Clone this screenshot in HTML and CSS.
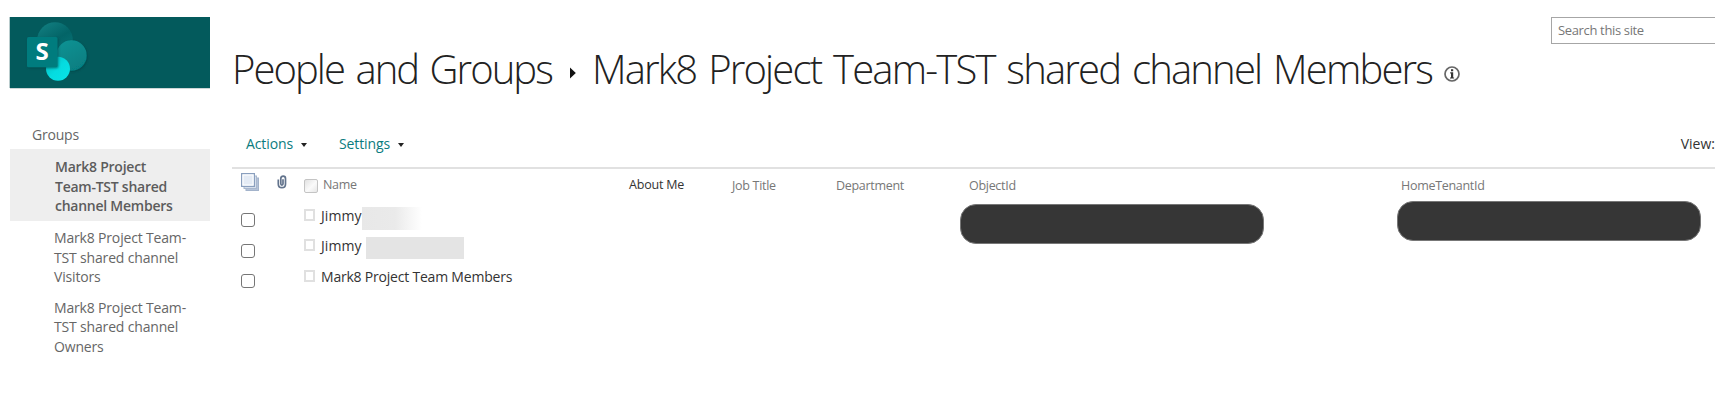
FILE: index.html
```html
<!DOCTYPE html>
<html lang="en">
<head>
<meta charset="utf-8">
<title>People and Groups</title>
<link rel="stylesheet" href="styles.css">
</head>
<body>
<div class="page">
  <aside class="sidebar">
    <div class="logo">
      <svg width="80" height="71" viewBox="0 0 80 71">
        <defs>
          <linearGradient id="g1" x1="0.2" y1="0" x2="0.8" y2="1"><stop offset="0" stop-color="#117e80"/><stop offset="0.5" stop-color="#036467"/><stop offset="1" stop-color="#087678"/></linearGradient>
          <linearGradient id="g2" x1="0.2" y1="0" x2="0.8" y2="1"><stop offset="0" stop-color="#0b9293"/><stop offset="1" stop-color="#067d80"/></linearGradient>
          <linearGradient id="g3" x1="0" y1="0" x2="1" y2="1"><stop offset="0" stop-color="#04b8bb"/><stop offset="0.5" stop-color="#05dce0"/><stop offset="1" stop-color="#08e4e8"/></linearGradient>
          <filter id="sh" x="-20%" y="-20%" width="150%" height="150%"><feDropShadow dx="0.8" dy="1" stdDeviation="1.1" flood-color="#003c40" flood-opacity="0.6"/></filter>
        </defs>
        <circle cx="45" cy="23" r="17.8" fill="url(#g1)"/>
        <circle cx="61.500" cy="38.500" r="15.200" fill="url(#g2)" filter="url(#sh)"/>
        <circle cx="48" cy="51.800" r="12" fill="url(#g3)"/>
        <rect x="17" y="20" width="30.500" height="30.300" rx="1.500" fill="#047b7e" filter="url(#sh)"/>
        <text x="32" y="42.800" class="logo-letter" text-anchor="middle">S</text>
      </svg>
    </div>
    <div class="nav-title"><span class="t-groups">Groups</span></div>
    <div class="nav-item selected">Mark8 Project<br>Team-TST shared<br>channel Members</div>
    <div class="nav-item">Mark8 Project Team-<br>TST shared channel<br>Visitors</div>
    <div class="nav-item">Mark8 Project Team-<br>TST shared channel<br>Owners</div>
  </aside>
  <main class="main">
    <div class="search-row"><div class="search"><span>Search this site</span></div></div>
    <h1 class="title">
      <span class="crumb">People and Groups</span>
      <svg class="crumb-arrow" width="6" height="12" viewBox="0 0 6 12"><path d="M0 0.500 5.800 6 0 11.500z" fill="#111"/></svg>
      <span class="current">Mark8 Project Team-TST shared channel Members</span>
      <svg class="info" width="16" height="16" viewBox="0 0 16 16"><circle cx="8" cy="8" r="7" fill="none" stroke="#666" stroke-width="1.700"/><path d="M7 3.300h2.200v1.900H7zM6.200 6.300h3v5.100h.9v1.100H6v-1.100h1V7.400h-.8z" fill="#333"/></svg>
    </h1>
    <div class="toolbar">
      <span class="menu actions">Actions</span><i class="caret c1"></i>
      <span class="menu settings">Settings</span><i class="caret c2"></i>
      <span class="view">View:</span>
    </div>
    <div class="table">
      <div class="cell h-all">
        <svg width="18" height="18" viewBox="0 0 18 18"><rect x="5" y="5" width="12.500" height="12.500" fill="#b4c2d8" stroke="#a3b3cb"/><rect x="3" y="3" width="12.500" height="12.500" fill="#d5deeb" stroke="#a8b7ce"/><rect x=".6" y=".6" width="12.800" height="12.800" fill="#e4ebf5" stroke="#8a9fbe" stroke-width="1.200"/><rect x="2" y="2" width="10" height="10" fill="none" stroke="#fff"/></svg>
      </div>
      <div class="cell h-clip">
        <svg width="10" height="14" viewBox="0 0 10 14" fill="none"><path d="M1.300 4.500v4.400c0 5 7.200 5 7.200 0V3.500c0-3.300-4.700-3.300-4.700 0v5.300c0 1.700 2.200 1.700 2.200 0V4.200" stroke="#62738c" stroke-width="1.700"/></svg>
      </div>
      <div class="cell h-name"><i class="presence-head"></i><span>Name</span></div>
      <div class="cell head about">About Me</div>
      <div class="cell head job">Job Title</div>
      <div class="cell head dept">Department</div>
      <div class="cell head obj">ObjectId</div>
      <div class="cell head home">HomeTenantId</div>

      <div class="check r1"></div>
      <div class="person r1"><i class="presence"></i><span class="jim">Jimmy</span><i class="mask fade"></i></div>
      <div class="check r2"></div>
      <div class="person r2"><i class="presence"></i><span class="jim">Jimmy</span><i class="mask solid"></i></div>
      <div class="check r3"></div>
      <div class="person r3"><i class="presence"></i><span class="team">Mark8 Project Team Members</span></div>
      <div class="pill pill-obj"></div>
      <div class="pill pill-home"></div>
    </div>
  </main>
</div>
</body>
</html>
```
FILE: styles.css
```css
* { box-sizing: border-box; }
body {
  margin: 0;
  background: #fff;
  color: #333;
  font: 14px/20px "Open Sans", "Noto Sans", sans-serif;
  overflow: hidden;
  white-space: nowrap;
}
.page { display: flex; width: 1715px; height: 409px; padding: 17px 0 0 10px; overflow: hidden; }
.sidebar { width: 200px; flex: none; }
.logo { height: 71px; background: #035a5c; box-shadow: 0 1px 0 #ccd6d7, -1px 0 0 #b9cccd; }
.logo svg { display: block; }
.logo-letter { font: 700 24px "Open Sans", sans-serif; fill: #fff; }
.nav-title { margin: 37px 0 4px; padding-left: 22px; color: #666; letter-spacing: -0.2px; }
.nav-item { line-height: 19.5px; padding-left: 44px; color: #666; letter-spacing: -0.17px; margin-bottom: 11px; }
.nav-item.selected { height: 72px; padding: 8px 0 0 45px; margin-bottom: 7px; background: #eee; font-weight: 600; color: #5c5c5c; letter-spacing: -0.25px; }

.main { flex: 1; margin-left: 22px; min-width: 0; }
.search-row { display: flex; justify-content: flex-end; height: 27px; }
.search { width: 164px; height: 27px; border: 1px solid #a6a6a6; border-right: 0; padding-left: 6px; font-size: 13px; line-height: 25px; color: #777; letter-spacing: -0.35px; }
.title { display: flex; margin: 0; height: 46px; font-size: 40px; line-height: 50px; font-weight: 300; color: #222; }
.crumb { width: 338px; letter-spacing: -1.95px; word-spacing: 3px; }
.crumb-arrow { margin-top: 23px; flex: none; }
.current { width: 868px; margin-left: 16px; letter-spacing: -1.82px; word-spacing: 3.2px; }
.info { margin-top: 22px; flex: none; margin-left: -16px; }
.toolbar { display: flex; margin-top: 44px; height: 35px; border-bottom: 2px solid #e1e1e1; padding-left: 14px; }
.menu { color: #0b7c7e; }
.actions { width: 55px; letter-spacing: -0.1px; }
.settings { width: 59px; margin-left: 32px; letter-spacing: -0.1px; }
.caret { width: 6px; height: 4px; margin-top: 9px; background: #222; clip-path: polygon(0 0, 100% 0, 50% 100%); }
.view { margin-left: auto; letter-spacing: 0; }

.table {
  display: grid;
  grid-template-columns: 36px 27px 325px 103px 104px 133px 432px 1fr;
  grid-template-rows: 37px 30px 30.500px 30px;
  padding-left: 9px;
}
.head, .h-name { padding-top: 8px; font-size: 12.500px; line-height: 18px; color: #777; letter-spacing: -0.3px; }
.h-name { padding-top: 7px; }
.head.about { color: #333; padding-top: 7px; letter-spacing: -0.2px; }
.h-all { padding-top: 4px; }
.h-clip { padding-top: 6px; }
.cell svg { display: block; }
.h-name { display: flex; gap: 5px; }
.presence-head { width: 14px; height: 14px; margin-top: 3px; border: 1px solid #c4c4c4; border-radius: 2px; background: linear-gradient(135deg, #e2e2e2, #fafafa 55%, #e6e6e6); }
.r1 { grid-row: 2; }
.r2 { grid-row: 3; }
.r3 { grid-row: 4; }
.check { grid-column: 1; width: 14px; height: 14px; margin-top: 7px; border: 1px solid #767676; border-radius: 3px; }
.check.r2 { margin-top: 8px; }
.person { grid-column: 3; display: flex; }
.presence { width: 11px; height: 12px; margin: 3px 6px 0 0; border: 2px solid #e0e0e0; }
.jim { width: 41px; letter-spacing: 0.1px; }
.team { letter-spacing: -0.21px; }
.mask { height: 23px; margin-top: 1px; }
.fade { width: 60px; background: linear-gradient(90deg, #e8e8e8, #eaeaea 55%, #fff); }
.solid { width: 98px; height: 22px; margin-left: 4px; background: #e4e4e4; }
.pill { height: 40px; width: 304px; border-radius: 16px; background: #363636; border: 1px solid #777; grid-row: 2 / span 3; }
.pill-obj { grid-column: 7; margin: -2px 0 0 -9px; }
.pill-home { grid-column: 8; margin: -5px 0 0 -4px; }
```
